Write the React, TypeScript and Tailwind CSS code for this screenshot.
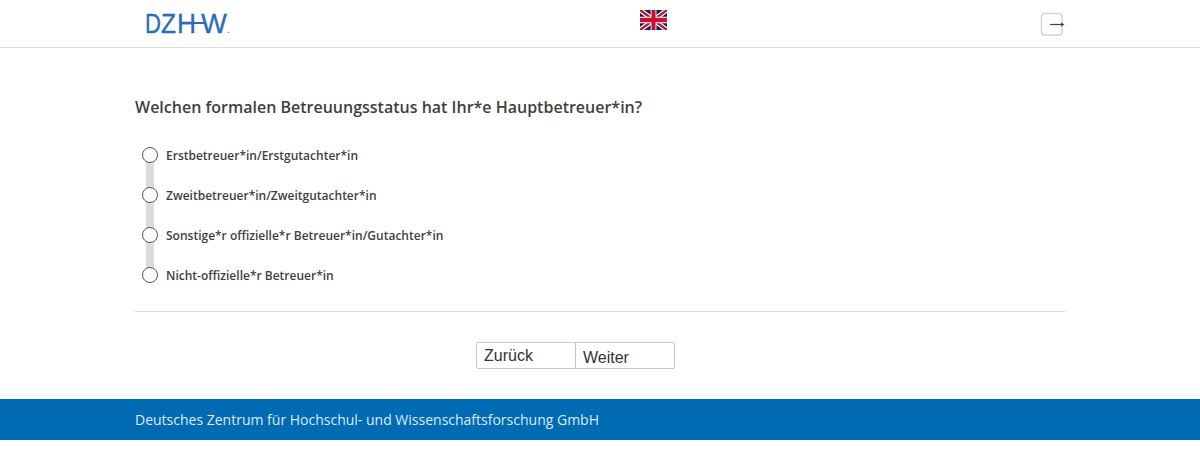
const options = [
  'Erstbetreuer*in/Erstgutachter*in',
  'Zweitbetreuer*in/Zweitgutachter*in',
  'Sonstige*r offizielle*r Betreuer*in/Gutachter*in',
  'Nicht-offizielle*r Betreuer*in',
];

function UkFlag() {
  return (
    <svg width="27" height="20" viewBox="0 0 60 40" preserveAspectRatio="none">
      <rect width="60" height="40" fill="#012169" />
      <path d="M0 0 L60 40 M60 0 L0 40" stroke="#fff" strokeWidth="10" />
      <path d="M0 0 L60 40 M60 0 L0 40" stroke="#c8102e" strokeWidth="5" />
      <path d="M30 0 V40 M0 20 H60" stroke="#fff" strokeWidth="13" />
      <path d="M30 0 V40 M0 20 H60" stroke="#c8102e" strokeWidth="9" />
    </svg>
  );
}

function ExitIcon() {
  return (
    <svg width="26" height="24" viewBox="0 0 26 24" fill="none">
      <rect x="1.5" y="1.5" width="20.5" height="21.5" rx="3" stroke="#d4d4d4" strokeWidth="1.4" />
      <path d="M10 12.5 H22" stroke="#444" strokeWidth="1.2" />
      <path d="M21 10.5 L24.5 12.5 L21 14.5 Z" fill="#444" />
    </svg>
  );
}

function Logo() {
  return (
    <div className="relative flex h-[26px] w-[86px] items-baseline font-['Liberation_Sans',sans-serif] text-[28px] leading-[26px] text-[#2b6cb8] [-webkit-text-stroke:0.3px_#2b6cb8]">
      <span className="mr-[-4.2px] origin-left scale-x-[0.79]">D</span>
      <span className="mr-[-1.1px] origin-left scale-x-[0.88]">Z</span>
      <span className="mr-[3.8px] origin-left scale-x-[0.94]">H</span>
      <span className="mr-[-0.5px] origin-left scale-x-[0.98]">W</span>
      <span className="text-[10px] [-webkit-text-stroke:0]">.</span>
      <span className="absolute top-[11px] left-[48px] h-[2px] w-[11px] bg-[#2b6cb8]" />
    </div>
  );
}

export default function App() {
  return (
    <div className="min-h-[449px] bg-white font-['Open_Sans',sans-serif] text-[#3f3f3f]">
      {/* Header */}
      <header className="h-[48px] border-b border-[#dcdcdc]">
        <div className="mx-auto flex h-full w-[930px] items-start justify-between">
          <div className="ml-[10px] pt-[11px]">
            <Logo />
          </div>
          <div className="pt-[10px] pl-[36px]">
            <UkFlag />
          </div>
          <div className="-mr-[1px] pt-[12px]">
            <ExitIcon />
          </div>
        </div>
      </header>

      <main className="mx-auto w-[930px]">
        <h1 className="mt-[48px] text-[16px] leading-[22px] font-semibold">
          Welchen formalen Betreuungsstatus hat Ihr*e Hauptbetreuer*in?
        </h1>

        {/* Radio list */}
        <div className="relative mt-[30px] flex flex-col gap-[24px] pb-[27px]">
          <div className="absolute top-[8px] left-[11px] h-[120px] w-[8px] bg-[#dcdcdc]" />
          {options.map((label) => (
            <label key={label} className="relative flex h-[16px] items-start">
              <span className="-mt-[1px] ml-[7px] h-[16px] w-[16px] rounded-full border border-[#555] bg-white" />
              <span className="ml-[8px] text-[12px] leading-[16px] font-semibold">{label}</span>
            </label>
          ))}
        </div>

        <div className="border-t border-[#dcdcdc]" />

        {/* Navigation buttons */}
        <div className="mt-[30px] flex justify-center pr-[49px]">
          <div className="flex h-[27px] w-[199px] rounded-[2px] border border-[#c8c8c8] font-['Liberation_Sans',sans-serif] text-[16px] text-[#333]">
            <button className="h-full w-[99px] border-r border-[#c8c8c8] pl-[7px] text-left leading-[22px]">Zurück</button>
            <button className="h-full flex-1 pt-[2px] pl-[7px] text-left leading-[26px]">Weiter</button>
          </div>
        </div>
      </main>

      {/* Footer */}
      <footer className="mt-[30px] h-[41px] bg-[#006ab3]">
        <div className="mx-auto w-[930px] text-[14px] leading-[41px] text-[#dcebf5]">
          Deutsches Zentrum für Hochschul- und Wissenschaftsforschung GmbH
        </div>
      </footer>
    </div>
  );
}
